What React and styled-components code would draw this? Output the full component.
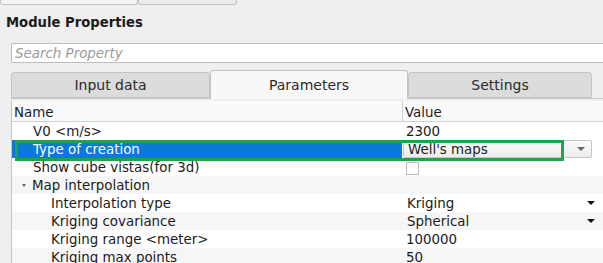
import React from 'react';
import styled, { createGlobalStyle } from 'styled-components';

const Global = createGlobalStyle`
  html, body { margin: 0; padding: 0; background: #efefef; }
  body { font-family: "DejaVu Sans", sans-serif; font-size: 13.4px; color: #1b1b1b; }
`;

const Page = styled.div`
  width: 603px;
  height: 263px;
  overflow: hidden;
  background: #efefef;
  display: flex;
  flex-direction: column;
`;

const TopStrip = styled.div`
  display: flex;
  flex: none;
  height: 5px;
`;

const StubTab = styled.div`
  width: ${(p) => p.w}px;
  height: 5px;
  border: 1px solid #c4c4c4;
  border-top: none;
  border-radius: 0 0 3px 3px;
  background: ${(p) => (p.light ? '#f4f4f4' : '#eaeaea')};
  box-sizing: border-box;
`;

const Title = styled.div`
  flex: none;
  font-weight: bold;
  font-size: 13.2px;
  padding: 10px 0 0 6px;
  height: 23px;
`;

const Search = styled.div`
  flex: none;
  margin: 5px 0 0 11px;
  height: 20px;
  background: #fff;
  border: 1px solid #bdbdbd;
  border-right: none;
  border-radius: 2px 0 0 2px;
  display: flex;
  align-items: center;
  padding-left: 3px;
  font-style: italic;
  color: #9a9a9a;
  box-sizing: border-box;
`;

const Tabs = styled.div`
  flex: none;
  margin: 6px 0 0 11px;
  display: flex;
  align-items: flex-end;
  height: 29px;
  border-bottom: 1px solid #c8c8c8;
`;

const Tab = styled.div`
  width: ${(p) => p.w}px;
  height: ${(p) => (p.active ? 29 : 26)}px;
  box-sizing: border-box;
  display: flex;
  align-items: center;
  justify-content: center;
  font-size: 14px;
  color: #2a2a2a;
  background: ${(p) => (p.active ? '#f8f8f8' : '#dcdcdc')};
  border: 1px solid #c4c4c4;
  border-bottom: ${(p) => (p.active ? 'none' : '1px solid #c4c4c4')};
  border-radius: 3px 3px 0 0;
  margin-bottom: ${(p) => (p.active ? -1 : 0)}px;
`;

const Table = styled.div`
  margin: 2px 0 0 11px;
  background: #fff;
  border-left: 1px solid #c4c4c4;
  flex: 1 0 auto;
`;

const Header = styled.div`
  display: grid;
  grid-template-columns: 390px 1fr;
  height: 20px;
  border-bottom: 1px solid #cfcfcf;
  background: #fafafa;
`;

const HeadCell = styled.div`
  display: flex;
  align-items: center;
  padding: 2px 0 0 2px;
  border-left: ${(p) => (p.sep ? '1px solid #d4d4d4' : 'none')};
`;

const Row = styled.div`
  display: grid;
  grid-template-columns: 390px 1fr;
  height: 18px;
  background: ${(p) => (p.alt ? '#f6f6f6' : '#ffffff')};
  position: relative;
  z-index: ${(p) => (p.selected ? 2 : 1)};
`;

const NameCell = styled.div`
  display: flex;
  align-items: center;
  padding-left: ${(p) => p.indent}px;
  background: ${(p) => (p.selected ? '#0b79d8' : 'transparent')};
  color: ${(p) => (p.selected ? '#ffffff' : '#1b1b1b')};
  white-space: nowrap;
`;

const Arrow = styled.span`
  width: 0;
  height: 0;
  margin-left: -11px;
  margin-right: 6px;
  border-left: 2.5px solid transparent;
  border-right: 2.5px solid transparent;
  border-top: 3px solid #666;
`;

const ValueCell = styled.div`
  display: flex;
  align-items: center;
  justify-content: space-between;
  padding: 0 8px 0 ${(p) => (p.pad ? 5 : 4)}px;
  white-space: nowrap;
`;

const Combo = styled.div`
  display: flex;
  align-items: center;
  justify-content: space-between;
  height: 18px;
  width: 100%;
  box-sizing: border-box;
  background: linear-gradient(#fbfbfb, #ececec);
  border: 1px solid #c6c6c6;
  border-radius: 2px;
  padding: 0 6px 0 4px;
  margin-left: -3px;
  margin-right: -7px;
`;

const Caret = styled.span`
  width: 0;
  height: 0;
  border-left: 4px solid transparent;
  border-right: 4px solid transparent;
  border-top: 4px solid ${(p) => (p.dark ? '#111' : '#666')};
`;

const Check = styled.span`
  width: 11px;
  height: 11px;
  border: 1px solid #bdbdbd;
  background: #fff;
  margin-top: 2px;
`;

const Highlight = styled.div`
  position: absolute;
  left: 3px;
  top: 0;
  width: 549px;
  height: 21px;
  border: 3px solid #1fa548;
  box-sizing: border-box;
  pointer-events: none;
`;

const rows = [
  { name: 'V0 <m/s>', indent: 21, value: '2300' },
  { name: 'Type of creation', indent: 21, combo: "Well's maps", selected: true },
  { name: 'Show cube vistas(for 3d)', indent: 21, check: true },
  { name: 'Map interpolation', indent: 21, group: true },
  { name: 'Interpolation type', indent: 39, value: 'Kriging', caret: true },
  { name: 'Kriging covariance', indent: 39, value: 'Spherical', caret: true },
  { name: 'Kriging range <meter>', indent: 39, value: '100000' },
  { name: 'Kriging max points', indent: 39, value: '50' },
];

export default function App() {
  return (
    <Page>
      <Global />
      <TopStrip>
        <StubTab w={138} light />
        <StubTab w={99} />
      </TopStrip>
      <Title>Module Properties</Title>
      <Search>Search Property</Search>
      <Tabs>
        <Tab w={199}>Input data</Tab>
        <Tab w={198} active>Parameters</Tab>
        <Tab w={184}>Settings</Tab>
      </Tabs>
      <Table>
        <Header>
          <HeadCell>Name</HeadCell>
          <HeadCell sep>Value</HeadCell>
        </Header>
        {rows.map((r, i) => (
          <Row key={r.name} alt={i % 2 === 1 && !r.selected} selected={r.selected}>
            <NameCell indent={r.indent} selected={r.selected}>
              {r.group && <Arrow />}
              {r.name}
            </NameCell>
            <ValueCell pad={r.caret}>
              {r.combo ? (
                <Combo>
                  {r.combo}
                  <Caret />
                </Combo>
              ) : r.check ? (
                <Check />
              ) : (
                <>
                  <span>{r.value}</span>
                  {r.caret && <Caret dark />}
                </>
              )}
            </ValueCell>
            {r.selected && <Highlight />}
          </Row>
        ))}
      </Table>
    </Page>
  );
}
